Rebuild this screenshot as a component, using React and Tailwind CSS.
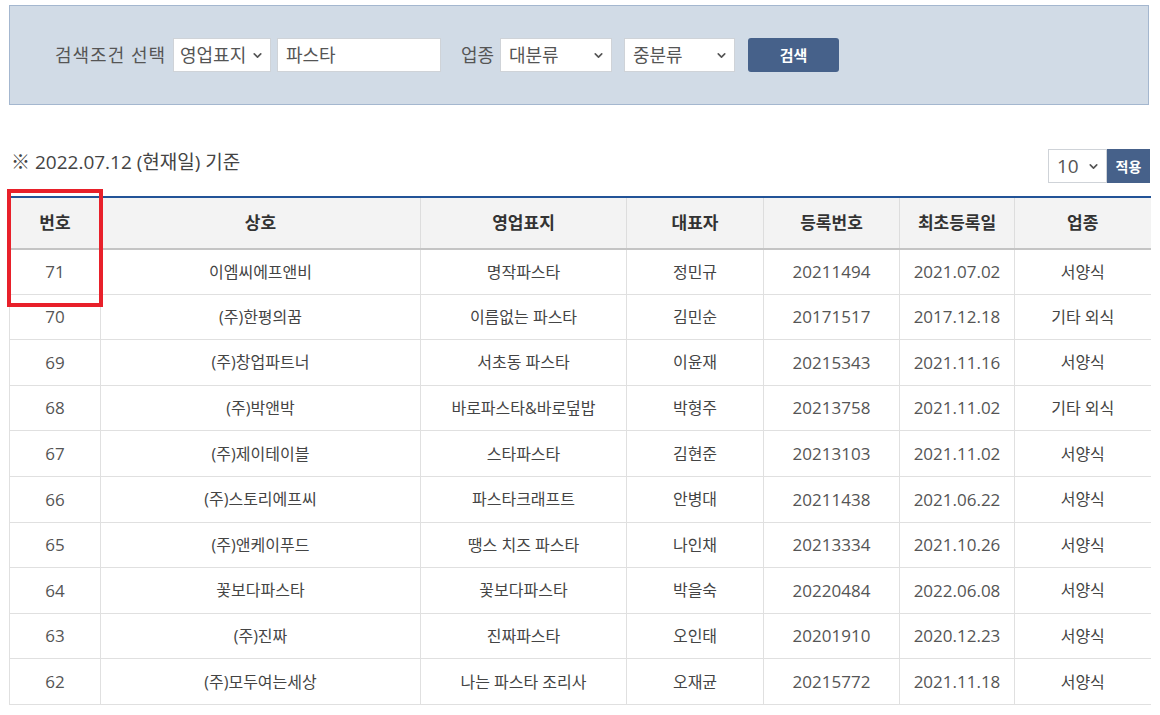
import React from 'react';
import { ChevronDown } from 'lucide-react';

const rows = [
  ['71', '이엠씨에프앤비', '명작파스타', '정민규', '20211494', '2021.07.02', '서양식'],
  ['70', '(주)한평의꿈', '이름없는 파스타', '김민순', '20171517', '2017.12.18', '기타 외식'],
  ['69', '(주)창업파트너', '서초동 파스타', '이윤재', '20215343', '2021.11.16', '서양식'],
  ['68', '(주)박앤박', '바로파스타&바로덮밥', '박형주', '20213758', '2021.11.02', '기타 외식'],
  ['67', '(주)제이테이블', '스타파스타', '김현준', '20213103', '2021.11.02', '서양식'],
  ['66', '(주)스토리에프씨', '파스타크래프트', '안병대', '20211438', '2021.06.22', '서양식'],
  ['65', '(주)앤케이푸드', '땡스 치즈 파스타', '나인채', '20213334', '2021.10.26', '서양식'],
  ['64', '꽃보다파스타', '꽃보다파스타', '박을숙', '20220484', '2022.06.08', '서양식'],
  ['63', '(주)진짜', '진짜파스타', '오인태', '20201910', '2020.12.23', '서양식'],
  ['62', '(주)모두여는세상', '나는 파스타 조리사', '오재균', '20215772', '2021.11.18', '서양식'],
];

const headers = ['번호', '상호', '영업표지', '대표자', '등록번호', '최초등록일', '업종'];
const widths = ['w-[91px]', 'w-[320px]', 'w-[206px]', 'w-[137px]', 'w-[136px]', 'w-[115px]', 'w-[136px]'];

function Select({ label, className }) {
  return (
    <div className={`flex shrink-0 items-center justify-between h-[34px] bg-white border border-[#cfd3d8] pl-[6px] pr-[6px] text-[18px] text-[#555] whitespace-nowrap ${className}`}>
      <span>{label}</span>
      <ChevronDown size={13} strokeWidth={3} className="shrink-0 text-[#555]" />
    </div>
  );
}

export default function App() {
  return (
    <div className="relative w-[1160px] h-[715px] overflow-hidden bg-white pt-[5px] pl-[9px] font-['Open_Sans','Noto_Sans_CJK_KR',sans-serif]">
      <div className="w-[1140px] h-[100px] bg-[#d1dbe6] border border-[#a4b7cf] flex items-center pl-[45px] text-[#555]">
        <span className="w-[118px] shrink-0 text-[18px] tracking-[1px] whitespace-nowrap">검색조건 선택</span>
        <Select label="영업표지" className="w-[98px]" />
        <div className="ml-[6px] w-[164px] h-[34px] shrink-0 bg-white border border-[#cfd3d8] pl-[8px] flex items-center text-[18px] text-[#555]">파스타</div>
        <span className="w-[39px] ml-[20px] shrink-0 text-[18px] whitespace-nowrap">업종</span>
        <Select label="대분류" className="w-[112px] pl-[8px]" />
        <Select label="중분류" className="w-[111px] ml-[12px] pl-[8px]" />
        <button className="ml-[13px] w-[91px] h-[34px] shrink-0 rounded-[3px] bg-[#46618a] text-white text-[15px] font-bold">검색</button>
      </div>

      <div className="flex items-center justify-between w-[1141px] mt-[43px] pl-[2px]">
        <span className="text-[19px] text-[#444] mb-[8px]">※ 2022.07.12 (현재일) 기준</span>
        <div className="flex">
          <Select label="10" className="w-[59px] pl-[8px] text-[19px]" />
          <button className="w-[43px] h-[34px] bg-[#46618a] text-white text-[14px] font-bold">적용</button>
        </div>
      </div>

      <table className="mt-[11px] w-[1141px] table-fixed border-collapse border-t-[2px] border-t-[#225397]">
        <thead>
          <tr className="h-[52px] bg-[#f3f3f3] border-b-[2px] border-b-[#c4c4c4]">
            {headers.map((h, i) => (
              <th key={h} className={`${widths[i]} border-l border-[#dddddd] text-[17px] font-bold text-[#333]`}>{h}</th>
            ))}
          </tr>
        </thead>
        <tbody>
          {rows.map((r) => (
            <tr key={r[0]} className="h-[45.6px] border-b border-[#e0e0e0]">
              {r.map((c, i) => (
                <td key={i} className={`border-l border-[#e0e0e0] text-center ${i === 0 || i === 4 || i === 5 ? 'text-[17px] text-[#555]' : 'text-[16px] text-[#444]'}`}>{c}</td>
              ))}
            </tr>
          ))}
        </tbody>
      </table>

      <div className="absolute left-[7px] top-[189px] w-[96px] h-[118px] border-4 border-[#e8202a]" />
    </div>
  );
}
